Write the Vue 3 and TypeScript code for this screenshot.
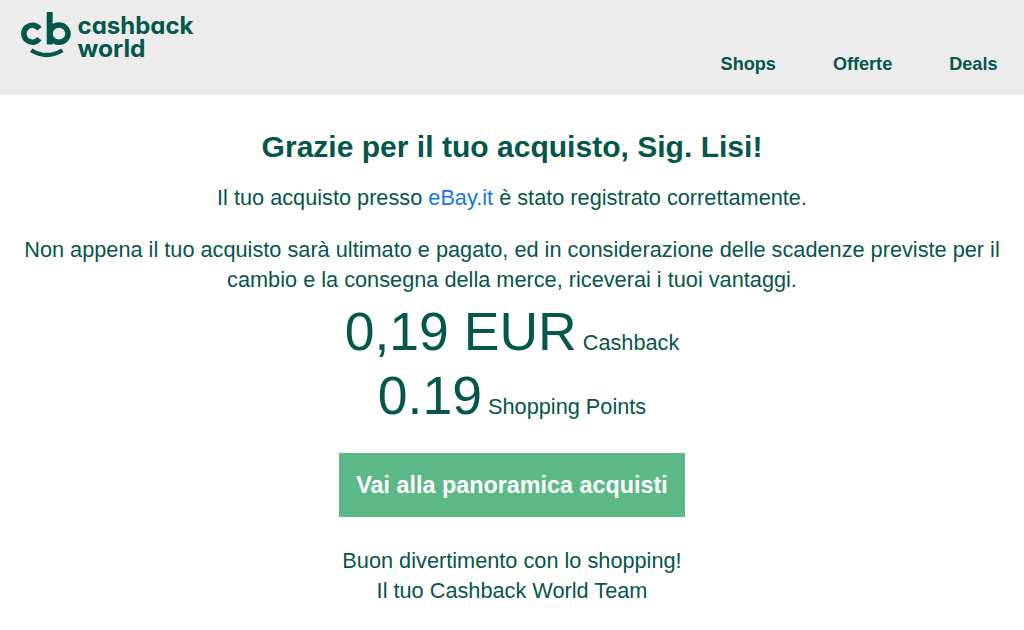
<script setup lang="ts">
const links: string[] = ['Shops', 'Offerte', 'Deals']
const rewards: { amount: string; label: string }[] = [
  { amount: '0,19 EUR', label: 'Cashback' },
  { amount: '0.19', label: 'Shopping Points' },
]
</script>

<template>
  <div class="page">
    <header class="header">
      <svg class="logo" viewBox="0 0 200 62" width="200" height="62" role="img" aria-label="cashback world">
        <g fill="none" stroke="#05564b">
          <path d="M39.3 28.8a8.5 8.5 0 1 0 0 9.8" stroke-width="5.5" />
          <ellipse cx="59" cy="33.7" rx="9" ry="8.6" stroke-width="5.5" />
          <path d="M49.7 12v32.5" stroke-width="6" />
          <path d="M31.2 50.2q15.6 9.6 31.2 0" stroke-width="4.2" />
        </g>
        <g class="wordmark">
          <text x="77.5" y="34.2" textLength="116" lengthAdjust="spacingAndGlyphs">cashback</text>
          <text x="77.5" y="56.7" textLength="68" lengthAdjust="spacingAndGlyphs">world</text>
        </g>
      </svg>
      <nav class="nav">
        <a v-for="link in links" :key="link">{{ link }}</a>
      </nav>
    </header>
    <main class="content">
      <h1>Grazie per il tuo acquisto, Sig. Lisi!</h1>
      <p class="registered">Il tuo acquisto presso <a class="shop">eBay.it</a> è stato registrato correttamente.</p>
      <p class="details">Non appena il tuo acquisto sarà ultimato e pagato, ed in considerazione delle scadenze previste per il<br>cambio e la consegna della merce, riceverai i tuoi vantaggi.</p>
      <div class="rewards">
        <div v-for="reward in rewards" :key="reward.label" class="reward">
          <span class="amount">{{ reward.amount }}</span> <span>{{ reward.label }}</span>
        </div>
      </div>
      <button class="cta" type="button">Vai alla panoramica acquisti</button>
      <p class="closing">Buon divertimento con lo shopping!<br>Il tuo Cashback World Team</p>
    </main>
  </div>
</template>

<style>
body {
  margin: 0;
  background: #fff;
}
</style>

<style scoped>
.page {
  width: 1024px;
  height: 630px;
  overflow: hidden;
  color: #05564b;
  font: 21.72px/30px "Liberation Sans", Arial, sans-serif;
}
.header {
  height: 95px;
  display: flex;
  justify-content: space-between;
  background: #ececec;
}
.logo {
  display: block;
}
.wordmark {
  fill: #05564b;
  font: 700 24px Inter, sans-serif;
  font-feature-settings: "cv11";
}
.nav {
  display: flex;
  gap: 57px;
  padding: 49px 26.5px 0 0;
  font-size: 18.1px;
  font-weight: 700;
}
.content {
  text-align: center;
  white-space: nowrap;
}
h1 {
  margin: 0;
  padding-top: 32px;
  font-size: 30.05px;
  line-height: 40px;
}
p {
  margin: 0;
}
.registered {
  padding-top: 16px;
}
.details {
  padding-top: 22px;
}
.shop {
  color: #1676e8;
}
.rewards {
  padding-top: 5px;
}
.reward {
  height: 64px;
  line-height: 64px;
}
.amount {
  font-size: 53.5px;
}
.cta {
  display: block;
  width: 346px;
  height: 64px;
  margin: 25px auto 0;
  padding: 0;
  border: 0;
  background: #5cb886;
  color: #fff;
  font: 700 23.35px "Liberation Sans", Arial, sans-serif;
}
.closing {
  padding-top: 29px;
}
</style>
